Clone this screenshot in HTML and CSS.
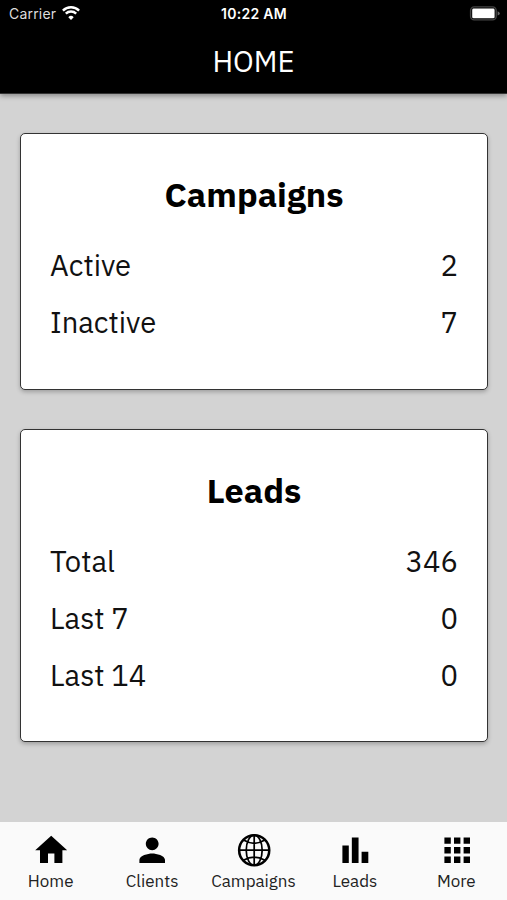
FILE: index.html
```html
<!DOCTYPE html>
<html lang="en">
<head>
    <meta charset="UTF-8">
    <meta name="viewport" content="width=device-width, initial-scale=1.0">
    <title>Home</title>
    <link rel="stylesheet" href="styles.css">
</head>
<body>
    <header>
        <div class="status-bar">
            <div class="carrier">
                <span>Carrier</span>
                <svg class="wifi" viewBox="0 0 18 14">
                    <path d="M0.9 4.6a11.6 11.6 0 0 1 16.2 0" />
                    <path d="M3.8 7.7a7.4 7.4 0 0 1 10.4 0" />
                    <path class="dot" d="M9 14L6.3 11.2a3.8 3.8 0 0 1 5.4 0z" />
                </svg>
            </div>
            <div class="time">10:22 AM</div>
            <svg class="battery" viewBox="0 0 31 15">
                <rect class="shell" x="1.6" y="0.9" width="25.6" height="13" rx="3.6" />
                <rect class="charge" x="3.2" y="2.5" width="22.4" height="9.8" rx="1.4" />
                <path class="tip" d="M28.6 5.2q2.2 0.8 2.2 2.2t-2.2 2.2z" />
            </svg>
        </div>
        <h1>HOME</h1>
    </header>

    <main>
        <section class="card">
            <h2>Campaigns</h2>
            <div class="row"><span>Active</span><span>2</span></div>
            <div class="row"><span>Inactive</span><span>7</span></div>
        </section>

        <section class="card">
            <h2>Leads</h2>
            <div class="row"><span>Total</span><span>346</span></div>
            <div class="row"><span>Last 7</span><span>0</span></div>
            <div class="row"><span>Last 14</span><span>0</span></div>
        </section>
    </main>

    <!-- Bottom Tabs -->
    <nav>
        <a href="#">
            <svg viewBox="0 0 24 24"><path d="M10 20v-6h4v6h5v-8h3L12 3 2 12h3v8z" /></svg>
            <span>Home</span>
        </a>
        <a href="#">
            <svg viewBox="0 0 24 24"><path d="M12 12c2.21 0 4-1.79 4-4s-1.79-4-4-4-4 1.79-4 4 1.79 4 4 4zm0 2c-2.67 0-8 1.34-8 4v2h16v-2c0-2.66-5.33-4-8-4z" /></svg>
            <span>Clients</span>
        </a>
        <a href="#">
            <svg class="globe" viewBox="0 0 38 38">
                <circle class="rim" cx="19" cy="19" r="14.9" />
                <ellipse cx="19" cy="19" rx="7.9" ry="14.9" />
                <path d="M19 4v30M4 19h30M8.4 9q10.6 6.4 21.2 0M8.4 29q10.6-6.4 21.2 0" />
            </svg>
            <span>Campaigns</span>
        </a>
        <a href="#">
            <svg viewBox="0 0 24 24"><path d="M4 9h4v11H4zM9.9 4h4.2v16H9.9zM16 13h4.2v7H16z" /></svg>
            <span>Leads</span>
        </a>
        <a href="#">
            <svg viewBox="0 0 24 24"><path d="M4 4h4v4H4zM10 4h4v4h-4zM16 4h4v4h-4zM4 10h4v4H4zM10 10h4v4h-4zM16 10h4v4h-4zM4 16h4v4H4zM10 16h4v4h-4zM16 16h4v4h-4z" /></svg>
            <span>More</span>
        </a>
    </nav>
</body>
</html>
```
FILE: styles.css
```css
/* Global Styles */
* {
    box-sizing: border-box;
}

body {
    font-family: 'IBM Plex Sans', 'Noto Sans', sans-serif;
    background-color: #d3d3d3;
    color: #111;
    margin: 0;
    height: 100vh;
    display: flex;
    flex-direction: column;
    overflow: hidden;
}

/* Header Styles */
header {
    height: 94px;
    flex-shrink: 0;
    background-color: #000;
    color: #fff;
    border-bottom: 1px solid #333;
    box-shadow: 0 2px 5px rgba(0, 0, 0, 0.35);
}

.status-bar {
    height: 27px;
    padding: 0 7px 0 9px;
    display: grid;
    grid-template-columns: 1fr auto 1fr;
    align-items: center;
    font-family: Inter, sans-serif;
    font-size: 14px;
}

.carrier {
    display: flex;
    align-items: center;
    gap: 6px;
    color: #ddd;
    letter-spacing: 0.2px;
}

.wifi {
    width: 18px;
    height: 14px;
    margin-top: -1px;
    fill: none;
    stroke: #fff;
    stroke-width: 2.4;
}

.wifi .dot {
    fill: #fff;
    stroke: none;
}

.time {
    margin-right: 1px;
    font-size: 14px;
    font-weight: 600;
    letter-spacing: 0.3px;
}

.battery {
    width: 31px;
    height: 15px;
    margin: -1px 0 0 0;
    justify-self: end;
}

.battery .shell {
    fill: none;
    stroke: #444;
    stroke-width: 1.4;
}

.battery .charge {
    fill: #fff;
}

.battery .tip {
    fill: #666;
}

h1 {
    margin: 14px 0 0;
    font-size: 29.2px;
    line-height: 40px;
    font-weight: 400;
    text-align: center;
}

/* Card Styles */
main {
    flex: 1;
    padding: 39px 19px 0 20px;
    display: flex;
    flex-direction: column;
    gap: 39px;
}

.card {
    padding: 30px 29px 37px;
    background-color: #fff;
    border: 1.5px solid #333;
    border-radius: 5px;
    box-shadow: 0 2px 4px rgba(0, 0, 0, 0.25);
}

h2 {
    margin: 0 0 13px;
    font-size: 34.2px;
    line-height: 60px;
    font-weight: 700;
    text-align: center;
    color: #000;
}

.row {
    height: 57.3px;
    display: flex;
    justify-content: space-between;
    font-size: 29.2px;
    line-height: 57px;
}

/* Bottom Tab Styles */
nav {
    height: 78px;
    padding-top: 9px;
    background-color: #fafafa;
    display: grid;
    grid-template-columns: repeat(5, 1fr);
}

nav a {
    display: flex;
    flex-direction: column;
    align-items: center;
    color: #222;
    text-decoration: none;
    font-size: 17px;
    line-height: 24px;
}

nav svg {
    width: 38.4px;
    height: 38.4px;
    margin-left: 1px;
    fill: #000;
}

nav .globe {
    fill: none;
    stroke: #000;
    stroke-width: 1.7;
}

.globe .rim {
    stroke-width: 2.5;
}
```
